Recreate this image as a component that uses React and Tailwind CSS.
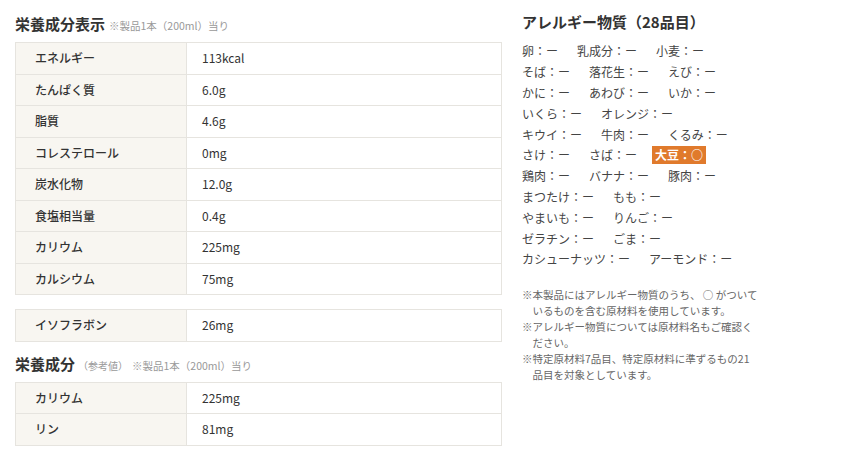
import React from 'react';

const nutrition = [
  ['エネルギー', '113kcal'],
  ['たんぱく質', '6.0g'],
  ['脂質', '4.6g'],
  ['コレステロール', '0mg'],
  ['炭水化物', '12.0g'],
  ['食塩相当量', '0.4g'],
  ['カリウム', '225mg'],
  ['カルシウム', '75mg'],
];

const reference = [
  ['カリウム', '225mg'],
  ['リン', '81mg'],
];

const allergens = [
  ['卵', '乳成分', '小麦'],
  ['そば', '落花生', 'えび'],
  ['かに', 'あわび', 'いか'],
  ['いくら', 'オレンジ'],
  ['キウイ', '牛肉', 'くるみ'],
  ['さけ', 'さば', '大豆'],
  ['鶏肉', 'バナナ', '豚肉'],
  ['まつたけ', 'もも'],
  ['やまいも', 'りんご'],
  ['ゼラチン', 'ごま'],
  ['カシューナッツ', 'アーモンド'],
];

// notes are broken where the original layout breaks them
const notes = [
  ['※本製品にはアレルギー物質のうち、 ○ がついて', 'いるものを含む原材料を使用しています。'],
  ['※アレルギー物質については原材料名もご確認く', 'ださい。'],
  ['※特定原材料7品目、特定原材料に準ずるもの21', '品目を対象としています。'],
];

const Table = ({ rows }) => (
  <div className="border border-[#e6e4df] border-b-0">
    {rows.map(([label, value]) => (
      <div key={label} className="flex h-[31.5px] border-b border-[#e6e4df] text-[12px]">
        <div className="w-[171px] shrink-0 bg-[#f8f6f1] border-r border-[#e6e4df] pl-[19px] flex items-center font-medium text-[#333]">
          {label}
        </div>
        <div className="flex-1 pl-[15px] flex items-center text-[#333]">{value}</div>
      </div>
    ))}
  </div>
);

const App = () => {
  return (
    <div
      className="w-[860px] h-[456px] bg-white flex text-[#333] overflow-hidden"
      style={{ fontFamily: '"Noto Sans CJK JP", "Noto Sans", sans-serif' }}
    >
      {/* 栄養成分 */}
      <div className="w-[487px] ml-[15px] pt-[14px]">
        <h2 className="h-[20px] flex items-baseline text-[15px] font-bold leading-[20px]">
          栄養成分表示
          <span className="ml-[4px] text-[10.5px] font-normal text-[#999]">※製品1本（200ml）当り</span>
        </h2>
        <div className="mt-[8px]">
          <Table rows={nutrition} />
        </div>
        <div className="mt-[14px]">
          <Table rows={[['イソフラボン', '26mg']]} />
        </div>
        <h2 className="mt-[12px] h-[20px] flex items-baseline text-[15px] font-bold leading-[20px]">
          栄養成分
          <span className="ml-[3px] text-[10px] font-normal text-[#999]">（参考値）</span>
          <span className="ml-[4px] text-[10.5px] font-normal text-[#999]">※製品1本（200ml）当り</span>
        </h2>
        <div className="mt-[8px]">
          <Table rows={reference} />
        </div>
      </div>

      {/* アレルギー物質 */}
      <div className="ml-[20px] w-[260px] pt-[12px]">
        <h2 className="text-[15px] font-bold leading-[20px]">アレルギー物質（28品目）</h2>
        <div className="mt-[9px] text-[12px] text-[#444]">
          {allergens.map((line, i) => (
            <div key={i} className="flex gap-x-[19px] h-[20.8px] items-center">
              {line.map((name) =>
                name === '大豆' ? (
                  <span key={name} className="-ml-[4px] bg-[#e07a2c] text-white font-bold px-[3px] leading-[18px]">
                    大豆：○
                  </span>
                ) : (
                  <span key={name}>{name}：ー</span>
                )
              )}
            </div>
          ))}
        </div>
        <ul className="mt-[17px] text-[10.5px] leading-[16px] text-[#666] whitespace-nowrap">
          {notes.map(([first, rest]) => (
            <li key={first}>
              <div>{first}</div>
              <div className="pl-[1em]">{rest}</div>
            </li>
          ))}
        </ul>
      </div>
    </div>
  );
};

export default App;
